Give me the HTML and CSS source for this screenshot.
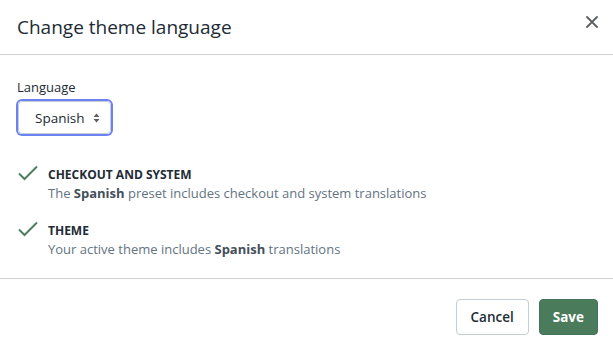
FILE: index.html
```html
<!DOCTYPE html>
<html>
<head>
    <title>Change theme language</title>
    <link rel="stylesheet" href="styles.css">
</head>
<body>
    <div class="modal">
        <div class="modal-header">
            <h2>Change theme language</h2>
            <button type="button" class="close" aria-label="Close">
                <svg width="12" height="12" viewBox="0 0 12 12"><path d="M1 1L11 11M11 1L1 11" stroke="#5c5f62" stroke-width="1.8" stroke-linecap="round"/></svg>
            </button>
        </div>
        <div class="modal-body">
            <label class="field-label">Language</label>
            <div class="select">
                <span>Spanish</span>
                <svg width="7" height="10" viewBox="0 0 7 10"><path d="M3.5 0.5L6.5 4H0.5Z M3.5 9.5L0.5 6H6.5Z" fill="#5c5f62"/></svg>
            </div>
            <div class="item">
                <svg class="check" width="22" height="18" viewBox="0 0 22 18"><path d="M2 9.5L7.5 15L20 2.5" fill="none" stroke="#4f7d5e" stroke-width="2"/></svg>
                <div>
                    <div class="item-title">CHECKOUT AND SYSTEM</div>
                    <div class="item-text">The <b>Spanish</b> preset includes checkout and system translations</div>
                </div>
            </div>
            <div class="item">
                <svg class="check" width="22" height="18" viewBox="0 0 22 18"><path d="M2 9.5L7.5 15L20 2.5" fill="none" stroke="#4f7d5e" stroke-width="2"/></svg>
                <div>
                    <div class="item-title">THEME</div>
                    <div class="item-text">Your active theme includes <b>Spanish</b> translations</div>
                </div>
            </div>
        </div>
        <div class="modal-footer">
            <button type="button" class="btn">Cancel</button>
            <button type="button" class="btn btn-primary">Save</button>
        </div>
    </div>
</body>
</html>
```

FILE: styles.css
```css
body {
    margin: 0;
    background: #fff;
    font-family: "Open Sans", "Noto Sans", sans-serif;
    color: #212b36;
}
.modal {
    width: 613px;
}
.modal-header {
    display: flex;
    align-items: center;
    justify-content: space-between;
    height: 54px;
    padding: 0 15px 0 17px;
    border-bottom: 1px solid #d3d3d3;
}
.modal-header h2 {
    margin: 0;
    font-size: 19px;
    font-weight: 400;
    color: #212b36;
}
.close {
    border: none;
    background: none;
    padding: 0;
    display: flex;
    margin-bottom: 11px;
}
.modal-body {
    padding: 23px 17px 20px 17px;
    height: 180px;
    border-bottom: 1px solid #d3d3d3;
}
.field-label {
    display: block;
    font-size: 13px;
    line-height: 18px;
    margin-bottom: 5px;
}
.select {
    display: inline-flex;
    align-items: center;
    gap: 8px;
    height: 31px;
    padding: 0 10px 0 16px;
    border: 1px solid #c4cdd5;
    border-radius: 4px;
    box-shadow: 0 0 0 2px #6d82f2;
    font-size: 13.5px;
    margin-left: 1px;
}
.item {
    display: flex;
    gap: 9px;
    margin-top: 32px;
}
.item + .item {
    margin-top: 20px;
}
.check {
    margin-top: -2px;
}
.item-title {
    font-size: 12px;
    font-weight: 700;
    line-height: 18px;
    color: #212b36;
}
.item-text {
    font-size: 13px;
    line-height: 18px;
    color: #637381;
}
.item-text b {
    color: #454f5b;
}
.modal-footer {
    display: flex;
    justify-content: flex-end;
    gap: 10px;
    padding: 20px 15px;
}
.btn {
    height: 36px;
    padding: 0 14px;
    border: 1px solid #c4cdd5;
    border-radius: 4px;
    background: #fff;
    font-family: inherit;
    font-size: 13.5px;
    font-weight: 600;
    color: #212b36;
}
.btn-primary {
    padding: 0 13px;
    background: #4a7c5c;
    border-color: #44725a;
    color: #fff;
    font-weight: 700;
}
```
